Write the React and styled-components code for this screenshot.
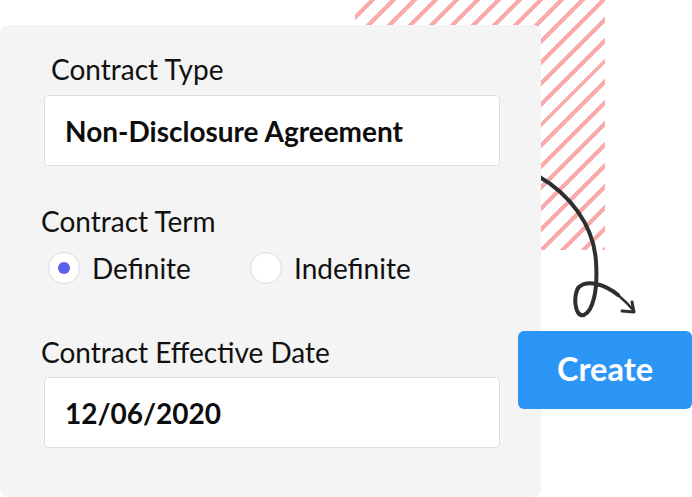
import React, {useState} from 'react';
import styled, {createGlobalStyle} from 'styled-components';

const GlobalStyle = createGlobalStyle`
html, body {
  margin: 0;
  padding: 0;
  background: #ffffff;
}
body {
  font-family: Lato, "Noto Sans", "Liberation Sans", sans-serif;
  color: #111111;
}
`

const Page = styled.div`
position: relative;
width: 692px;
height: 497px;
overflow: hidden;
background: #ffffff;
`

const Hatch = styled.div`
position: absolute;
left: 355px;
top: 0;
width: 250px;
height: 250px;
background: repeating-linear-gradient(
  135deg,
  #ffffff 0px,
  #ffffff 10.6px,
  #f9aaaa 10.6px,
  #f9aaaa 14.8px
);
`

const ArrowSvg = styled.svg`
position: absolute;
left: 0;
top: 0;
pointer-events: none;
`

const Row = styled.div`
position: relative;
display: flex;
align-items: flex-start;
`

const Card = styled.form`
position: relative;
z-index: 2;
box-sizing: border-box;
width: 541px;
height: 472px;
margin-top: 25px;
padding: 27px 41px 0 41px;
background: #f4f4f4;
border-radius: 8px;
display: flex;
flex-direction: column;
`

const Label = styled.div`
font-size: 28px;
line-height: 34px;
font-weight: 400;
color: #111111;
margin-top: ${p => p.$top || 0}px;
padding-left: ${p => p.$indent || 0}px;
`

const Field = styled.div`
box-sizing: border-box;
width: 456px;
height: 71px;
margin-left: 3px;
margin-top: ${p => p.$top || 0}px;
padding: 0 20px;
background: #ffffff;
border: 1px solid #dedede;
border-radius: 4px;
display: flex;
align-items: center;
font-size: 28px;
font-weight: 700;
color: #0d0d0d;
`

const RadioRow = styled.div`
display: flex;
align-items: center;
margin-top: 13px;
margin-left: 7px;
`

const RadioOption = styled.label`
display: flex;
align-items: center;
gap: 12px;
width: 202px;
font-size: 28px;
line-height: 34px;
cursor: pointer;
`

const RadioCircle = styled.span`
box-sizing: border-box;
width: 32px;
height: 32px;
border-radius: 50%;
background: #ffffff;
border: 1px solid #dcdcdc;
display: flex;
align-items: center;
justify-content: center;
&::after {
  content: '';
  width: 12px;
  height: 12px;
  border-radius: 50%;
  background: ${p => (p.$checked ? '#5a5ee9' : 'transparent')};
}
`

const CreateButton = styled.button`
position: relative;
z-index: 3;
width: 174px;
height: 78px;
margin-top: 331px;
margin-left: -23px;
padding: 0 0 4px 0;
border: none;
border-radius: 6px;
background: #2c96f6;
color: #ffffff;
font-family: Lato, "Noto Sans", sans-serif;
font-size: 32.5px;
font-weight: 700;
cursor: pointer;
`

const Arrow = () => (
  <ArrowSvg width="692" height="497" viewBox="0 0 692 497">
    <path
      d="M538 176 C568 193 594 224 596 262 C598 290 593 311 584 315 C574 318 573 293 579 287 C588 279 606 285 618 295"
      fill="none" stroke="#2f2f2f" strokeWidth="4" strokeLinecap="round" />
    <path
      d="M618 295 C624 300 629 305 634 311"
      fill="none" stroke="#2f2f2f" strokeWidth="2.5" strokeLinecap="round" />
    <path
      d="M622 311 L634 312 L632 302"
      fill="none" stroke="#2f2f2f" strokeWidth="3" strokeLinecap="round" strokeLinejoin="round" />
  </ArrowSvg>
)

const App = () => {
  const [term, setTerm] = useState('definite');

  return (
    <Page>
      <GlobalStyle />
      <Hatch />
      <Arrow />
      <Row>
        <Card onSubmit={(e) => e.preventDefault()}>
          <Label $indent={10}>Contract Type</Label>
          <Field $top={9}>Non-Disclosure Agreement</Field>
          <Label $top={38}>Contract Term</Label>
          <RadioRow>
            <RadioOption onClick={() => setTerm('definite')}>
              <RadioCircle $checked={term === 'definite'} />
              Definite
            </RadioOption>
            <RadioOption onClick={() => setTerm('indefinite')}>
              <RadioCircle $checked={term === 'indefinite'} />
              Indefinite
            </RadioOption>
          </RadioRow>
          <Label $top={50}>Contract Effective Date</Label>
          <Field $top={8}>12/06/2020</Field>
        </Card>
        <CreateButton>Create</CreateButton>
      </Row>
    </Page>
  )
}

export default App;
